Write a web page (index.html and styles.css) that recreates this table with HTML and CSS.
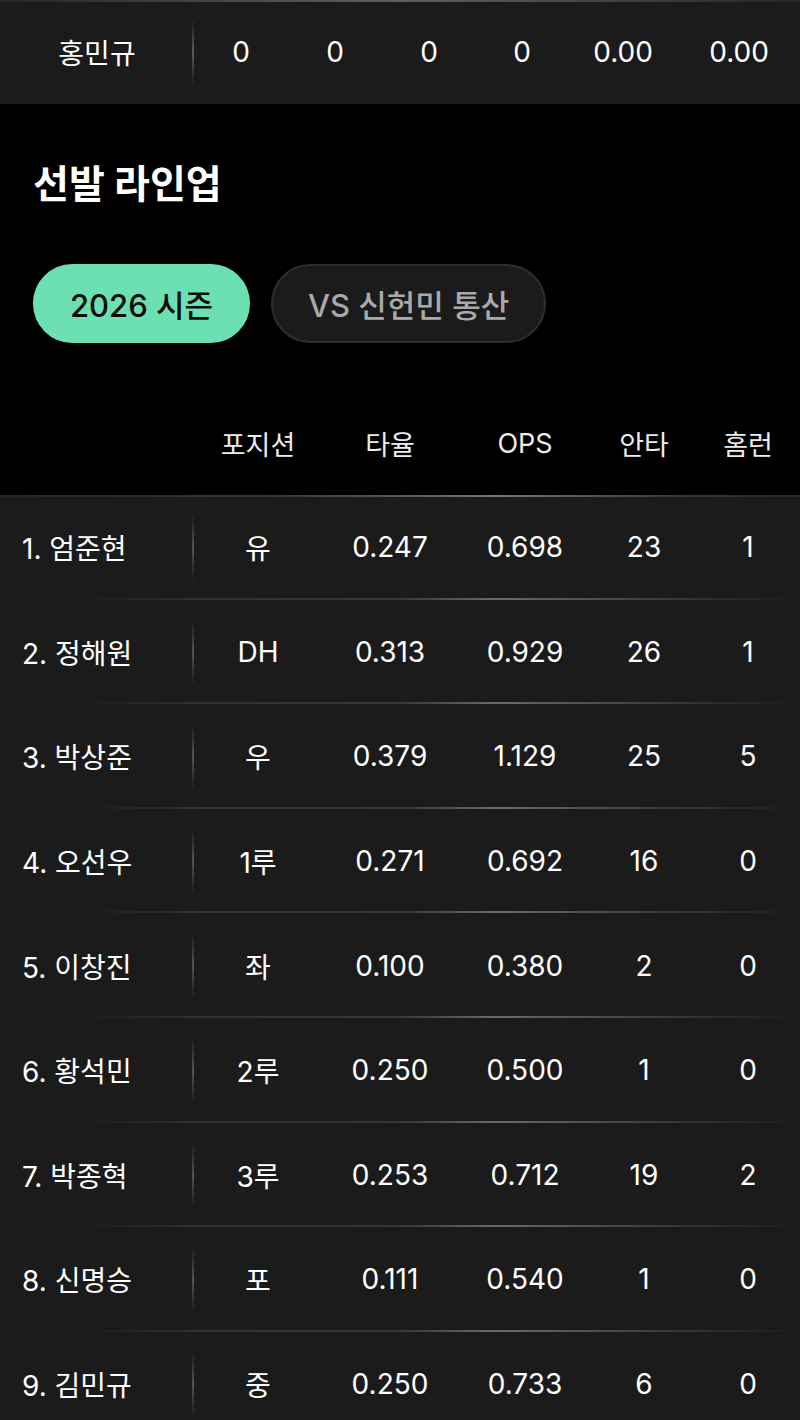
FILE: index.html
```html
<!DOCTYPE html>
<html lang="ko">
<head>
<meta charset="utf-8">
<title>선발 라인업</title>
<link rel="stylesheet" href="styles.css">
</head>
<body>
<div class="prev-row">
  <div class="prev-name">홍민규</div>
  <div class="cell">0</div>
  <div class="cell">0</div>
  <div class="cell">0</div>
  <div class="cell">0</div>
  <div class="cell">0.00</div>
  <div class="cell">0.00</div>
</div>

<section class="lineup">
  <h2 class="title">선발 라인업</h2>
  <div class="tabs">
    <button class="tab tab-active">2026 시즌</button>
    <button class="tab">VS 신헌민 통산</button>
  </div>

  <div class="thead">
    <div></div>
    <div class="cell">포지션</div>
    <div class="cell">타율</div>
    <div class="cell">OPS</div>
    <div class="cell">안타</div>
    <div class="cell">홈런</div>
  </div>

  <div class="tbody">
    <div class="row"><div class="name">1. 엄준현</div><div class="cell">유</div><div class="cell">0.247</div><div class="cell">0.698</div><div class="cell">23</div><div class="cell">1</div></div>
    <div class="row"><div class="name">2. 정해원</div><div class="cell">DH</div><div class="cell">0.313</div><div class="cell">0.929</div><div class="cell">26</div><div class="cell">1</div></div>
    <div class="row"><div class="name">3. 박상준</div><div class="cell">우</div><div class="cell">0.379</div><div class="cell">1.129</div><div class="cell">25</div><div class="cell">5</div></div>
    <div class="row"><div class="name">4. 오선우</div><div class="cell">1루</div><div class="cell">0.271</div><div class="cell">0.692</div><div class="cell">16</div><div class="cell">0</div></div>
    <div class="row"><div class="name">5. 이창진</div><div class="cell">좌</div><div class="cell">0.100</div><div class="cell">0.380</div><div class="cell">2</div><div class="cell">0</div></div>
    <div class="row"><div class="name">6. 황석민</div><div class="cell">2루</div><div class="cell">0.250</div><div class="cell">0.500</div><div class="cell">1</div><div class="cell">0</div></div>
    <div class="row"><div class="name">7. 박종혁</div><div class="cell">3루</div><div class="cell">0.253</div><div class="cell">0.712</div><div class="cell">19</div><div class="cell">2</div></div>
    <div class="row"><div class="name">8. 신명승</div><div class="cell">포</div><div class="cell">0.111</div><div class="cell">0.540</div><div class="cell">1</div><div class="cell">0</div></div>
    <div class="row"><div class="name">9. 김민규</div><div class="cell">중</div><div class="cell">0.250</div><div class="cell">0.733</div><div class="cell">6</div><div class="cell">0</div></div>
  </div>
</section>
</body>
</html>
```

FILE: styles.css
```css
* { box-sizing: border-box; }

html, body {
  margin: 0;
  padding: 0;
  background: #000;
}

body {
  width: 800px;
  height: 1420px;
  overflow: hidden;
  font-family: "Inter", "Noto Sans CJK KR", sans-serif;
  color: #fff;
}

.cell {
  text-align: center;
  white-space: nowrap;
}

/* previous table last row */
.prev-row {
  display: grid;
  grid-template-columns: 194px 94px 94px 94px 92px 110px 1fr;
  align-items: center;
  height: 104px;
  font-size: 28px;
  background-color: #1b1b1b;
  background-image: linear-gradient(to right, rgba(255,255,255,0.05), rgba(255,255,255,0.3) 50%, rgba(255,255,255,0.05));
  background-size: 100% 2px;
  background-position: top;
  background-repeat: no-repeat;
}

.prev-name {
  height: 100%;
  display: flex;
  align-items: center;
  justify-content: center;
  background-image: linear-gradient(to bottom, transparent, rgba(255,255,255,0.28) 50%, transparent);
  background-size: 2px 64%;
  background-position: right center;
  background-repeat: no-repeat;
}

/* lineup section */
.lineup {
  padding-top: 54px;
}

.title {
  margin: 0 0 0 33px;
  font-size: 39px;
  line-height: 52px;
  font-weight: 700;
}

.tabs {
  display: flex;
  gap: 21px;
  padding-left: 33px;
  margin-top: 54px;
}

.tab {
  height: 79px;
  padding: 0 35px;
  border-radius: 40px;
  border: 2px solid #2e2e2e;
  background: #1b1b1b;
  color: #a9a9a9;
  font-family: inherit;
  font-size: 31px;
  font-weight: 500;
}

.tab-active {
  background: #6ce0b3;
  border-color: #6ce0b3;
  color: #0d0d0d;
}

.thead {
  display: grid;
  grid-template-columns: 194px 128px 136px 134px 104px 1fr;
  align-items: center;
  height: 104px;
  margin-top: 48px;
  font-size: 27px;
  color: #ececec;
}

.tbody {
  background-color: #1b1b1b;
  background-image: linear-gradient(to right, rgba(255,255,255,0.04), rgba(255,255,255,0.12) 35%, rgba(255,255,255,0.4) 62%, rgba(255,255,255,0.12) 85%, rgba(255,255,255,0.05));
  background-size: 100% 2px;
  background-position: top;
  background-repeat: no-repeat;
}

.row {
  display: grid;
  grid-template-columns: 194px 128px 136px 134px 104px 1fr;
  align-items: center;
  height: 104.6px;
  font-size: 28px;
  background-image: linear-gradient(to right, transparent 10%, rgba(255,255,255,0.1) 25%, rgba(255,255,255,0.12) 50%, rgba(255,255,255,0.35) 62%, rgba(255,255,255,0.12) 85%, transparent);
  background-size: 100% 2px;
  background-position: bottom;
  background-repeat: no-repeat;
}

.name {
  height: 100%;
  display: flex;
  align-items: center;
  padding-left: 22px;
  white-space: nowrap;
  background-image: linear-gradient(to bottom, transparent, rgba(255,255,255,0.25) 50%, transparent);
  background-size: 2px 64%;
  background-position: right center;
  background-repeat: no-repeat;
}
```
